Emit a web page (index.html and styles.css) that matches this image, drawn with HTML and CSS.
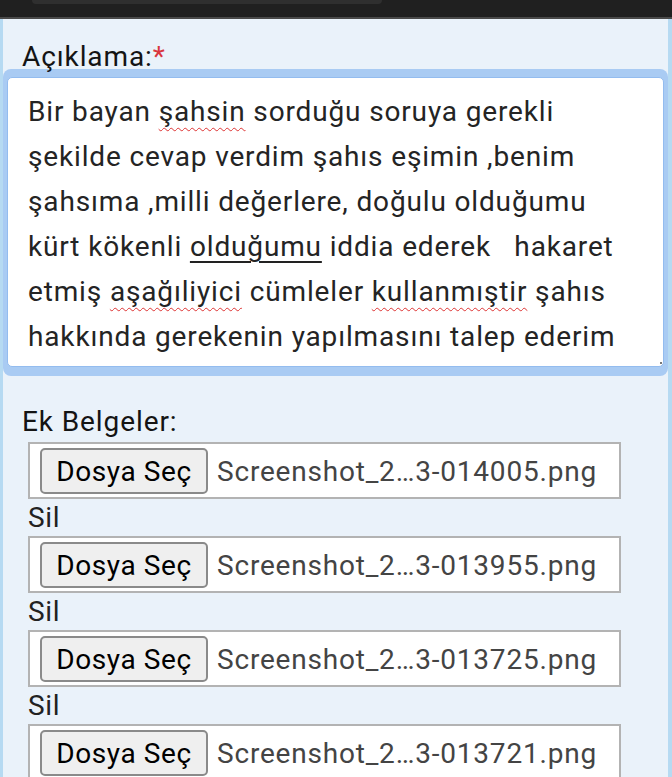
FILE: index.html
```html
<!DOCTYPE html>
<html lang="tr">
<head>
<meta charset="utf-8">
<title>Açıklama</title>
<link rel="stylesheet" href="styles.css">
</head>
<body>
<header class="topbar"><div class="pill"></div></header>
<main class="panel">
  <div class="label label-desc">Açıklama:<span class="req">*</span></div>
  <div class="ring">
    <div class="area">Bir bayan <span class="spell">şahsin</span> sorduğu soruya gerekli<br>şekilde cevap verdim şahıs eşimin ,benim<br>şahsıma ,milli değerlere, doğulu olduğumu<br>kürt kökenli <span class="uline">olduğumu</span> iddia ederek&nbsp;&nbsp; hakaret<br>etmiş <span class="spell">aşağıliyici</span> cümleler <span class="spell">kullanmıştir</span> şahıs<br>hakkında gerekenin yapılmasını talep ederim</div>
  </div>
  <div class="label label-files">Ek Belgeler:</div>
  <div class="files">
    <div class="file"><span class="btn">Dosya Seç</span><span class="fname">Screenshot_2…3-014005.png</span></div>
    <div class="sil">Sil</div>
    <div class="file"><span class="btn">Dosya Seç</span><span class="fname">Screenshot_2…3-013955.png</span></div>
    <div class="sil">Sil</div>
    <div class="file"><span class="btn">Dosya Seç</span><span class="fname">Screenshot_2…3-013725.png</span></div>
    <div class="sil">Sil</div>
    <div class="file"><span class="btn">Dosya Seç</span><span class="fname">Screenshot_2…3-013721.png</span></div>
  </div>
</main>
</body>
</html>
```
FILE: styles.css
```css
* { box-sizing: border-box; }
html, body { margin: 0; padding: 0; }
body {
  font-family: Roboto, "Noto Sans", sans-serif;
  font-size: 28px;
  background: #eaf2fa;
  color: #111;
  height: 777px;
  overflow: hidden;
}
.topbar {
  height: 19px;
  background: #202020;
  border-bottom: 2px solid #4a4a4a;
  padding-left: 32px;
}
.pill {
  width: 350px;
  height: 4px;
  background: #2f2f2f;
  border-radius: 0 0 14px 14px;
}
.panel {
  border-left: 3px solid #b6daf2;
  border-right: 4px solid #b6daf2;
  padding-top: 26px;
  min-height: 758px;
}
.label {
  padding-left: 19px;
  color: #141414;
  letter-spacing: 0.9px;
}
.label-desc { line-height: 24px; }
.req { color: #d9363e; }
.ring {
  background: #a9cbf3;
  padding: 8px 4px 9px 4px;
  border-radius: 8px;
}
.area {
  position: relative;
  background: #fff;
  border: 1px solid #93bcef;
  border-radius: 5px;
  padding: 11px 8px 7px 20px;
  line-height: 45px;
  color: #242424;
  letter-spacing: 0.85px;
  white-space: nowrap;
}
.area::after {
  content: "";
  position: absolute;
  right: 1px;
  bottom: 2px;
  width: 2px;
  height: 2px;
  background: #777;
}
.spell {
  text-decoration: underline wavy #d33;
  text-decoration-thickness: 1px;
  text-underline-offset: 6px;
}
.uline {
  text-decoration: underline solid #222;
  text-decoration-thickness: 2px;
  text-underline-offset: 5px;
}
.label-files {
  line-height: 32px;
  margin-top: 30px;
  margin-bottom: 4px;
}
.files { padding-left: 25px; }
.file {
  display: flex;
  align-items: center;
  width: 593px;
  height: 57px;
  background: #fff;
  border: 2px solid #b3b3b3;
  padding: 4px 0 3px 10px;
}
.btn {
  display: flex;
  align-items: center;
  justify-content: center;
  width: 168px;
  height: 46px;
  background: #efefef;
  border: 2px solid #8a8a8a;
  border-radius: 5px;
  color: #000;
  letter-spacing: 0.6px;
}
.fname {
  margin-left: 9px;
  color: #444;
  letter-spacing: 0.8px;
  white-space: nowrap;
}
.sil {
  line-height: 37px;
  color: #222;
  letter-spacing: 0.6px;
}
```
